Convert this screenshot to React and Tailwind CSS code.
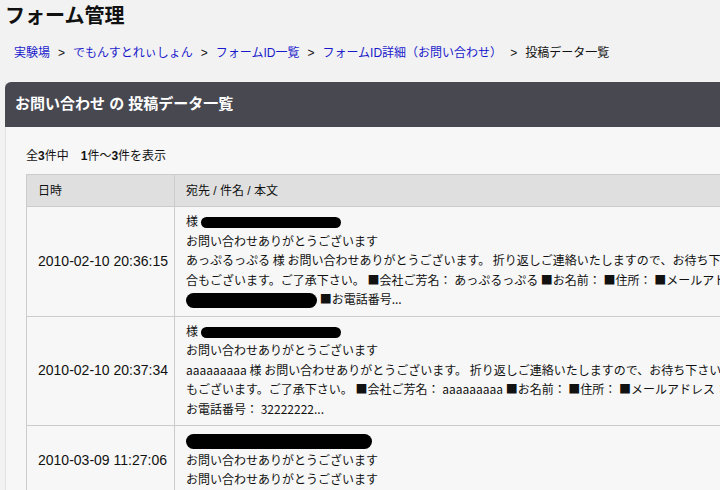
import React from 'react';

const font = { fontFamily: '"Liberation Sans", "Noto Sans CJK JP", sans-serif' };
const jp = { fontFamily: '"Noto Sans CJK JP", "Liberation Sans", sans-serif' };

const crumbs = ['実験場', 'でもんすとれぃしょん', 'フォームID一覧', 'フォームID詳細（お問い合わせ）'];

function Redact({ w, h = 11 }) {
  return <span className={`inline-block bg-black rounded-full align-middle ${w} ${h === 11 ? 'h-[11px]' : 'h-[15px]'}`} />;
}

const rows = [
  {
    date: '2010-02-10 20:36:15',
    lines: [
      <>様 <Redact w="w-[140px]" /></>,
      'お問い合わせありがとうございます',
      'あっぷるっぷる 様 お問い合わせありがとうございます。 折り返しご連絡いたしますので、お待ち下さい。なお、内容によってはお時間をいただく場',
      '合もございます。ご了承下さい。 ■会社ご芳名： あっぷるっぷる ■お名前： ■住所： ■メールアドレス：',
      <><Redact w="w-[131px]" h={15} /> ■お電話番号...</>,
    ],
  },
  {
    date: '2010-02-10 20:37:34',
    lines: [
      <>様 <Redact w="w-[140px]" /></>,
      'お問い合わせありがとうございます',
      'aaaaaaaaa 様 お問い合わせありがとうございます。 折り返しご連絡いたしますので、お待ち下さい。なお、内容によってはお時間をいただく場合',
      'もございます。ご了承下さい。 ■会社ご芳名： aaaaaaaaa ■お名前： ■住所： ■メールアドレス： ■',
      'お電話番号： 32222222...',
    ],
  },
  {
    date: '2010-03-09 11:27:06',
    lines: [
      <><Redact w="w-[186px]" h={15} /></>,
      'お問い合わせありがとうございます',
      'お問い合わせありがとうございます',
    ],
  },
];

export default function App() {
  return (
    <div className="w-[720px] h-[490px] overflow-hidden bg-[#f2f2f2] text-[#111]" style={font}>
      <h1 className="text-[20px] font-bold leading-none pl-[5px] pt-[6px]">フォーム管理</h1>
      <nav className="flex items-center text-[12px] pl-[14px] mt-[18px] whitespace-nowrap">
        {crumbs.map((c) => (
          <React.Fragment key={c}>
            <a className="text-[#1a1acc]">{c}</a>
            <span className="mx-[8px]">&gt;</span>
          </React.Fragment>
        ))}
        <span>投稿データ一覧</span>
      </nav>

      {/* panel */}
      <section className="ml-[5px] mt-[20px] w-[1100px] border-l border-[#e2e2e2] bg-[#f7f7f7]">
        <h2 className="h-[45px] flex items-center pl-[10px] bg-[#484851] text-white text-[15px] font-bold rounded-tl-[6px] -ml-px">
          お問い合わせ の 投稿データ一覧
        </h2>
        <div className="pl-[20px] pt-[23px]">
          <p className="text-[12px] leading-none">
            全<b>3</b>件中　<b>1</b>件〜<b>3</b>件を表示
          </p>
          <table className="mt-[12px] w-[1000px] border-collapse text-[12px]">
            <thead>
              <tr className="bg-[#dfdfdf] h-[32px]">
                <th className="w-[148px] text-left font-normal pl-[11px] border border-[#cccccc]">日時</th>
                <th className="text-left font-normal pl-[11px] border border-[#cccccc]">宛先 / 件名 / 本文</th>
              </tr>
            </thead>
            <tbody>
              {rows.map((r) => (
                <tr key={r.date}>
                  <td className="align-middle pl-[11px] whitespace-nowrap text-[14px] border border-[#cccccc]">{r.date}</td>
                  <td className="pl-[11px] pt-[4px] pb-[7px] border border-[#cccccc] leading-[19.5px]" style={jp}>
                    {r.lines.map((l, i) => (
                      <div key={i} className="whitespace-nowrap">{l}</div>
                    ))}
                  </td>
                </tr>
              ))}
            </tbody>
          </table>
        </div>
      </section>
    </div>
  );
}
